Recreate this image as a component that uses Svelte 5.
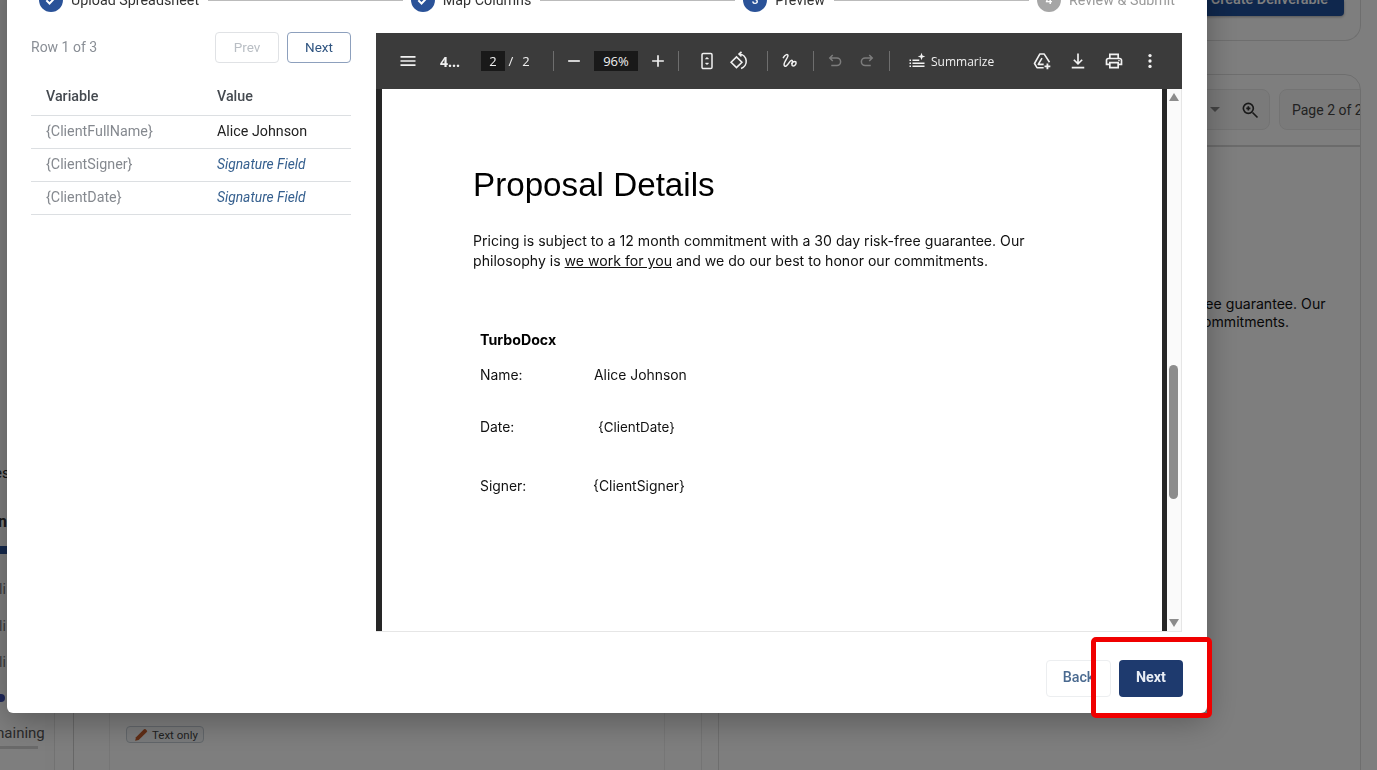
<script>
  const steps = [
    { label: "Upload Spreadsheet", done: true },
    { label: "Map Columns", done: true },
    { label: "Preview", num: 3 },
    { label: "Review & Submit", num: 4, idle: true }
  ];
  const rows = [
    { name: "{ClientFullName}", value: "Alice Johnson" },
    { name: "{ClientSigner}", value: "Signature Field", sig: true },
    { name: "{ClientDate}", value: "Signature Field", sig: true }
  ];
</script>

<div class="app">
  <div class="side">
    <div class="side-row r-es">es</div>
    <div class="side-row r-n">n</div>
    <div class="side-bar"></div>
    <div class="side-row r-li">li</div>
    <div class="side-row r-li">li</div>
    <div class="side-row r-li">li</div>
    <div class="side-dot"></div>
    <div class="side-row r-rem">Remaining</div>
    <div class="side-line"></div>
  </div>
  <div class="mid">
    <div class="mid-inner">
      <span class="chip">
        <svg width="14" height="14" viewBox="0 0 12 12"><path d="M1 11l.7-3L8.600 1.100a1 1 0 0 1 1.400 0l1 1a1 1 0 0 1 0 1.400L4 10.300z" fill="#c05a2a" /></svg>
        Text only
      </span>
    </div>
  </div>
  <div class="main">
    <div class="top-card">
      <span class="create">Create Deliverable</span>
    </div>
    <div class="doc-card">
      <div class="doc-tools">
        <div class="doc-chip zoom-chip">
          <span class="caret"></span>
          <svg width="20" height="20" viewBox="0 0 24 24" fill="none" stroke="#333" stroke-width="2"><circle cx="10" cy="10" r="6" /><path d="M15 15l6 6M10 7.500v5M7.500 10h5" /></svg>
        </div>
        <div class="doc-chip page-chip">Page 2 of 2</div>
      </div>
      <div class="doc-text">
        Pricing is subject to a 12 month commitment with a 30 day risk-free guarantee. Our<br />
        philosophy is we work for you and we do our best to honor our commitments.
      </div>
    </div>
  </div>
</div>

<div class="overlay">
  <div class="modal">
    <div class="stepper">
      {#each steps as step, i}
        <div class="step" class:idle={step.idle}>
          <span class="circle">
            {#if step.done}
              <svg width="14" height="14" viewBox="0 0 24 24" fill="none" stroke="#fff" stroke-width="3.400"><path d="M4 12.500l5.500 5.500L20 7" /></svg>
            {:else}
              {step.num}
            {/if}
          </span>
          <span>{step.label}</span>
        </div>
        {#if i < steps.length - 1}
          <div class="step-line"></div>
        {/if}
      {/each}
    </div>

    <div class="body">
      <div class="vars">
        <div class="vars-head">
          <span class="row-count">Row 1 of 3</span>
          <div class="pager">
            <button class="pager-btn" disabled>Prev</button>
            <button class="pager-btn">Next</button>
          </div>
        </div>
        <table>
          <thead>
            <tr><th>Variable</th><th>Value</th></tr>
          </thead>
          <tbody>
            {#each rows as row}
              <tr>
                <td class="var-name">{row.name}</td>
                <td class:sig={row.sig}>{row.value}</td>
              </tr>
            {/each}
          </tbody>
        </table>
      </div>

      <div class="viewer">
        <div class="toolbar">
          <span class="tb">
            <svg width="20" height="20" viewBox="0 0 24 24" fill="#f1f1f1"><path d="M3 18h18v-2H3v2zm0-5h18v-2H3v2zm0-7v2h18V6H3z" /></svg>
          </span>
          <span class="doc-title">4...</span>
          <span class="page-input">2</span>
          <span class="slash">/</span>
          <span class="total">2</span>
          <span class="divider d-page"></span>
          <span class="tb ml4">
            <svg width="20" height="20" viewBox="0 0 24 24" fill="#f1f1f1"><path d="M19 13H5v-2h14v2z" /></svg>
          </span>
          <span class="zoom-input">96%</span>
          <span class="tb ml4">
            <svg width="20" height="20" viewBox="0 0 24 24" fill="#f1f1f1"><path d="M19 13h-6v6h-2v-6H5v-2h6V5h2v6h6v2z" /></svg>
          </span>
          <span class="divider ml4"></span>
          <span class="tb ml12">
            <svg width="20" height="20" viewBox="0 0 24 24" fill="none" stroke="#f1f1f1" stroke-width="1.800"><rect x="6" y="3" width="12" height="18" rx="1.500" /><path d="M12 7.500l-2 2h4zM12 16.500l-2-2h4z" fill="#f1f1f1" stroke-width="0.600" /></svg>
          </span>
          <span class="tb">
            <svg width="20" height="20" viewBox="0 0 24 24" fill="none" stroke="#f1f1f1" stroke-width="1.900"><path d="M2.500 13.500L9 7l6.500 6.500L9 20z" /><path d="M12.500 3.500a9 9 0 0 1 2 17.500" /><path d="M15 1l-3 2.700 3 2.800" /></svg>
          </span>
          <span class="divider ml12"></span>
          <span class="tb ml6">
            <svg width="20" height="20" viewBox="0 0 24 24" fill="none" stroke="#f1f1f1" stroke-width="1.800" stroke-linecap="round"><path d="M4 8C6 4 10 3 9.500 6 9 9 4 14 5 17c1 3 4 0 6-3s4-4 4-1c0 2-2 5 1 5 2 0 4-3 3-5-1-1-4 0-5 2" /></svg>
          </span>
          <span class="divider ml7"></span>
          <span class="tb ml5">
            <svg width="18" height="18" viewBox="0 0 24 24" fill="none" stroke="#7c7c7c" stroke-width="2"><path d="M9 4L5 8l4 4M5 8h9.500a5 5 0 0 1 0 10H7" /></svg>
          </span>
          <span class="tb">
            <svg width="18" height="18" viewBox="0 0 24 24" fill="none" stroke="#7c7c7c" stroke-width="2"><path d="M15 4l4 4-4 4M19 8H9.500a5 5 0 0 0 0 10H17" /></svg>
          </span>
          <span class="divider ml6"></span>
          <span class="summarize">
            <svg width="18" height="18" viewBox="0 0 24 24" fill="#f1f1f1"><path d="M2 10h2v2H2zM6 10h9v2H6zM2 14h2v2H2zM6 14h16v2H6zM2 18h2v2H2zM6 18h16v2H6zM18 1l1.300 3.700L23 6l-3.700 1.300L18 11l-1.300-3.700L13 6l3.700-1.300z" /></svg>
            Summarize
          </span>
          <span class="tb36 push">
            <svg width="20" height="20" viewBox="0 0 24 24" fill="none" stroke="#f1f1f1" stroke-width="1.900"><path d="M21 13.500L14.500 3.500h-5L3 15l3 5h8" stroke-linejoin="round" /><path d="M12 8.500L7.500 16H14" stroke-linejoin="round" /><path d="M18.500 15v7M15 18.500h7" stroke-width="2.200" /></svg>
          </span>
          <span class="tb36">
            <svg width="20" height="20" viewBox="0 0 24 24" fill="none" stroke="#f1f1f1" stroke-width="2"><path d="M12 3v12M7 10.500l5 5 5-5M4.500 20h15" /></svg>
          </span>
          <span class="tb36">
            <svg width="20" height="20" viewBox="0 0 24 24" fill="#f1f1f1"><path d="M19 8h-1V3H6v5H5c-1.660 0-3 1.340-3 3v6h4v4h12v-4h4v-6c0-1.660-1.340-3-3-3zM8 5h8v3H8V5zm8 12v2H8v-4h8v2zm2-2v-2H6v2H4v-4c0-.55.45-1 1-1h14c.55 0 1 .45 1 1v4h-2z" /><circle cx="18" cy="11.500" r="1" /></svg>
          </span>
          <span class="tb36">
            <svg width="20" height="20" viewBox="0 0 24 24" fill="#f1f1f1"><circle cx="12" cy="5.500" r="2" /><circle cx="12" cy="12" r="2" /><circle cx="12" cy="18.500" r="2" /></svg>
          </span>
        </div>
        <div class="pages">
          <div class="page">
            <h1>Proposal Details</h1>
            <p>
              Pricing is subject to a 12 month commitment with a 30 day risk-free guarantee. Our
              philosophy is <u>we work for you</u> and we do our best to honor our commitments.
            </p>
            <div class="sign-block">
              <div class="company">TurboDocx</div>
              <div class="sign-row name-row"><span>Name:</span><span>Alice Johnson</span></div>
              <div class="sign-row date-row"><span>Date:</span><span class="nudge">{"{ClientDate}"}</span></div>
              <div class="sign-row signer-row"><span>Signer:</span><span class="nudge-s">{"{ClientSigner}"}</span></div>
            </div>
          </div>
          <div class="scroll">
            <span class="arrow up"></span>
            <span class="thumb"></span>
            <span class="arrow down"></span>
          </div>
        </div>
      </div>
    </div>

    <div class="footer">
      <button class="back">Back</button>
      <button class="next">Next</button>
    </div>
  </div>
</div>

<div class="callout"></div>

<style>
  :global(body) {
    margin: 0;
    overflow: hidden;
    font-family: Roboto, "Liberation Sans", sans-serif;
  }

  .app {
    display: flex;
    height: 770px;
    overflow: hidden;
    background: #fdfdfd;
    font-size: 14px;
    color: #333;
  }

  .side {
    width: 55px;
    flex: none;
    box-sizing: border-box;
    padding-top: 463px;
    border-right: 1px solid #e4e4e4;
    box-shadow: inset -9px 0 0 #fbfbfb;
    overflow: hidden;
  }
  .side-row {
    white-space: nowrap;
    height: 20px;
    line-height: 20px;
  }
  .r-es { margin-left: -6px; font-size: 15px; color: #222; }
  .r-n { margin: 29px 0 0 -2px; font-weight: 700; font-size: 16px; }
  .side-bar { width: 30px; height: 8px; margin-top: 14px; background: #2a5298; }
  .r-li { margin: 0 0 16.500px -1px; color: #777; }
  .side-bar + .r-li { margin-top: 25px; }
  .side-dot { width: 8px; height: 8px; margin: 21.500px 0 0 -3px; border-radius: 50%; background: #3f51b5; }
  .r-rem { margin: 21px 0 0 -26px; font-size: 15px; color: #555; }
  .side-line { width: 38px; height: 3px; margin-top: 3px; background: #d4d4d4; }

  .mid {
    width: 629px;
    flex: none;
    box-sizing: border-box;
    display: flex;
    align-items: stretch;
    margin-left: 18px;
    padding-left: 35px;
    border-left: 1px solid #cfcfcf;
    border-right: 1px solid #e8e8e8;
  }
  .mid-inner {
    width: 556px;
    box-sizing: border-box;
    padding: 726px 0 0 16px;
    border-left: 1px solid #ececec;
    border-right: 1px solid #ececec;
  }
  .chip {
    display: inline-flex;
    align-items: center;
    gap: 4px;
    height: 15px;
    padding: 0 5px 0 7px;
    border: 1px solid #c4ccd4;
    border-radius: 4px;
    background: #f3f5f7;
    font-size: 11.500px;
    color: #444;
  }

  .main {
    flex: 1;
    margin-left: 16px;
    margin-right: 16px;
    min-width: 0;
  }
  .top-card {
    height: 41px;
    box-sizing: border-box;
    display: flex;
    justify-content: flex-end;
    align-items: flex-start;
    padding-right: 16px;
    border: 1px solid #ddd;
    border-top: 0;
    border-radius: 0 0 16px 16px;
  }
  .create {
    height: 16px;
    line-height: 0;
    padding: 0 16px;
    background: #1e4f9a;
    color: #fff;
    border-radius: 0 0 4px 4px;
    font-size: 14.400px;
    font-weight: 500;
    white-space: nowrap;
    box-shadow: 0 1px 3px #0005;
  }
  .doc-card {
    margin-top: 33px;
    height: 700px;
    border: 1px solid #ddd;
    border-radius: 16px 16px 0 0;
    overflow: hidden;
  }
  .doc-tools {
    display: flex;
    justify-content: flex-end;
    gap: 9px;
    height: 72px;
    box-sizing: border-box;
    padding-top: 14px;
    border-bottom: 2px solid #d6d6d6;
    margin-right: -39px;
  }
  .doc-chip {
    display: flex;
    align-items: center;
    height: 41px;
    border: 1px solid #e6e6e6;
    border-radius: 8px;
    background: #f5f5f5;
    color: #444;
    font-size: 14px;
    box-sizing: border-box;
  }
  .zoom-chip { width: 100px; justify-content: flex-end; gap: 20px; padding-right: 9px; }
  .page-chip { width: 120px; padding-left: 12px; }
  .caret {
    width: 0;
    height: 0;
    border-left: 5px solid transparent;
    border-right: 5px solid transparent;
    border-top: 5px solid #888;
  }
  .doc-text {
    padding: 148px 0 0 55px;
    line-height: 18px;
    white-space: nowrap;
    font-family: Inter, sans-serif;
    font-size: 14.100px;
    color: #111;
  }

  .overlay {
    position: fixed;
    inset: 0;
    background: rgba(0, 0, 0, 0.5);
    overflow: hidden;
  }
  .modal {
    position: absolute;
    left: 7px;
    top: -40px;
    width: 1200px;
    height: 753px;
    display: flex;
    flex-direction: column;
    background: #fff;
    border-radius: 6px;
    box-shadow: 0 8px 32px rgba(0, 0, 0, 0.3);
  }

  .stepper {
    display: flex;
    align-items: center;
    padding: 28px 32px 0;
    font-size: 14.300px;
    color: #333;
  }
  .step {
    display: flex;
    align-items: center;
    gap: 8px;
    white-space: nowrap;
  }
  .step.idle { color: #9a9a9a; }
  .circle {
    width: 24px;
    height: 24px;
    border-radius: 50%;
    background: #2a5298;
    color: #fff;
    font-size: 12px;
    font-weight: 500;
    display: flex;
    align-items: center;
    justify-content: center;
  }
  .step.idle .circle { background: #a6a6a6; }
  .step-line {
    flex: 1;
    height: 1px;
    margin: 0 8px 0 9px;
    background: #bbb;
  }

  .body {
    display: flex;
    gap: 25px;
    padding: 19px 25px 0 24px;
  }
  .vars { width: 320px; flex: none; }
  .vars-head {
    display: flex;
    justify-content: space-between;
    align-items: center;
    height: 32px;
  }
  .row-count { color: #8a8f96; font-size: 14px; }
  .pager { display: flex; gap: 8px; }
  .pager-btn {
    width: 64px;
    height: 31px;
    background: #fff;
    border: 1px solid #8da0bd;
    border-radius: 4px;
    color: #2f5480;
    font: 400 13.500px Roboto, sans-serif;
  }
  .pager-btn:disabled {
    border-color: #e0e2e5;
    color: #b9bec4;
  }
  table {
    width: 320px;
    margin-top: 17px;
    border-collapse: collapse;
    font-size: 14.300px;
  }
  th, td {
    padding: 0 0 2px 15px;
    text-align: left;
    border-bottom: 1px solid #dcdfe2;
    box-sizing: border-box;
  }
  td { height: 33px; color: #222; }
  th {
    height: 35px;
    padding-bottom: 3px;
    font-weight: 500;
    color: #454a50;
  }
  th:first-child, td:first-child { width: 171px; }
  .var-name { color: #85898f; }
  .sig {
    font-style: italic;
    font-size: 13.800px;
    color: #36608f;
  }

  .viewer {
    width: 806px;
    height: 599px;
    flex: none;
    margin-top: 2px;
    display: flex;
    flex-direction: column;
    font-family: "Open Sans", "Noto Sans", sans-serif;
  }
  .toolbar {
    height: 56px;
    flex: none;
    display: flex;
    align-items: center;
    padding: 0 14px 0 16px;
    background: #3b3b3b;
    color: #f1f1f1;
    font-size: 13px;
  }
  .tb, .tb36 {
    height: 32px;
    width: 32px;
    flex: none;
    display: flex;
    align-items: center;
    justify-content: center;
  }
  .tb36 { width: 36px; }
  .push { margin-left: auto; }
  .ml4 { margin-left: 4px; }
  .ml5 { margin-left: 5px; }
  .ml6 { margin-left: 6px; }
  .ml7 { margin-left: 7px; }
  .ml12 { margin-left: 12px; }
  .doc-title {
    width: 20px;
    margin-left: 16px;
    font-weight: 700;
    font-size: 14px;
    white-space: nowrap;
  }
  .page-input, .zoom-input {
    height: 20px;
    line-height: 20px;
    text-align: center;
    background: #191919;
  }
  .page-input { width: 24px; margin-left: 21px; }
  .zoom-input { width: 44px; margin-left: 4px; }
  .slash { width: 12px; text-align: center; }
  .total { width: 18px; text-align: center; }
  .divider {
    width: 1px;
    height: 20px;
    flex: none;
    background: #6e6e6e;
  }
  .d-page { margin-left: 18px; }
  .summarize {
    display: flex;
    align-items: center;
    gap: 5px;
    margin-left: 18px;
    font-size: 12px;
    white-space: nowrap;
  }

  .pages {
    flex: 1;
    min-height: 0;
    display: flex;
    border-bottom: 1px solid #e6e6e6;
  }
  .page {
    flex: 1;
    box-sizing: border-box;
    padding: 75px 0 0 91px;
    background: #fff;
    border-left: 6px solid #262626;
    border-right: 5px solid #262626;
    font-family: Inter, sans-serif;
    font-size: 14.100px;
    color: #111;
  }
  h1 {
    margin: 0;
    font: 400 33.200px/42px "Liberation Sans", sans-serif;
    color: #000;
  }
  p {
    width: 600px;
    margin: 25px 0 0;
    line-height: 20px;
  }
  .sign-block { padding: 59px 0 0 7px; }
  .company { font-weight: 700; font-size: 14.200px; line-height: 20px; color: #000; }
  .sign-row { display: grid; grid-template-columns: 114px 1fr; line-height: 20px; font-size: 13.900px; }
  .name-row { margin-top: 15px; }
  .date-row { margin-top: 32px; }
  .signer-row { margin-top: 39px; }
  .nudge { padding-left: 4px; font-size: 13.400px; }
  .nudge-s { margin-left: -1px; }

  .scroll {
    width: 14px;
    flex: none;
    position: relative;
    background: #fafafa;
    border-right: 1px solid #e6e6e6;
  }
  .thumb {
    position: absolute;
    left: 2px;
    top: 276px;
    width: 9px;
    height: 134px;
    border-radius: 5px;
    background: #8c8c8c;
  }
  .arrow {
    position: absolute;
    left: 2px;
    width: 0;
    height: 0;
    border-left: 5px solid transparent;
    border-right: 5px solid transparent;
  }
  .up { top: 4px; border-bottom: 8px solid #8c8c8c; }
  .down { bottom: 4px; border-top: 8px solid #8c8c8c; }

  .footer {
    display: flex;
    justify-content: flex-end;
    gap: 8px;
    padding: 28px 24px 0 0;
  }
  .footer button {
    height: 37px;
    padding: 0 0 3px;
    border-radius: 4px;
    font: 500 14.300px Roboto, sans-serif;
  }
  .back {
    width: 65px;
    background: #fff;
    border: 1px solid #eceef0;
    color: #4a6a90;
  }
  .next {
    width: 64px;
    background: #1e3a6e;
    border: 0;
    color: #e8edf5;
    font-weight: 700 !important;
  }

  .callout {
    position: fixed;
    left: 1091px;
    top: 637px;
    width: 121px;
    height: 81px;
    box-sizing: border-box;
    border: 5px solid #f00000;
    border-radius: 5px;
  }
</style>
